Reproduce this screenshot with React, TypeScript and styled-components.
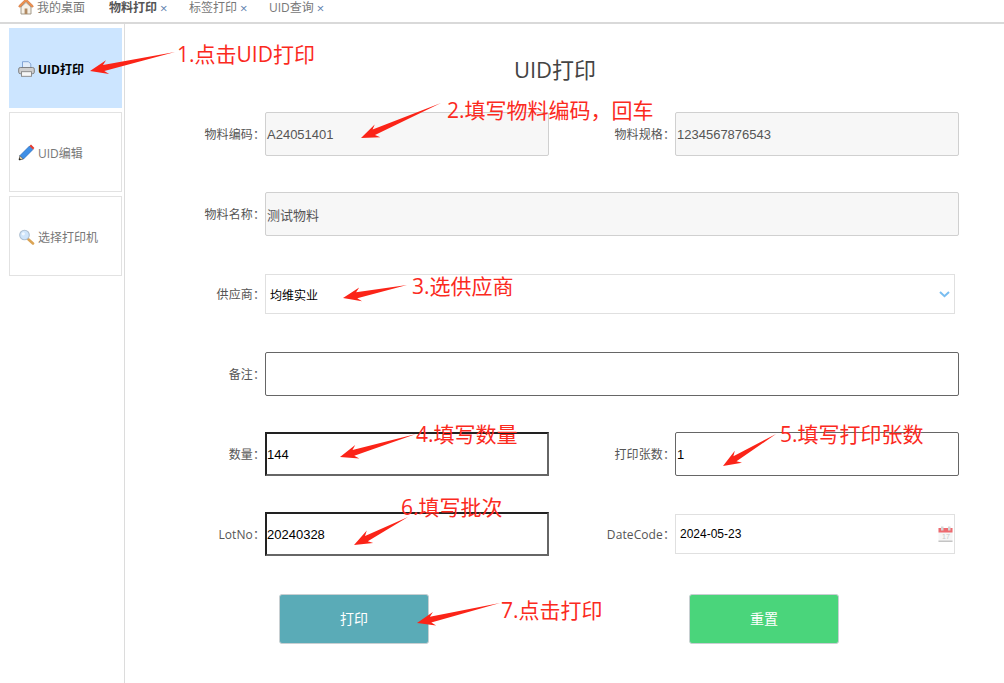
import React from "react";
import styled, { createGlobalStyle } from "styled-components";

const FONT = `"Open Sans", "Noto Sans CJK SC", sans-serif`;
const FIELD_FONT = `"Liberation Sans", "Noto Sans CJK SC", sans-serif`;

const GlobalStyle = createGlobalStyle`
  html, body {
    margin: 0;
    padding: 0;
    background: #fff;
    font-family: ${FONT};
    overflow: hidden;
  }
  * { box-sizing: border-box; }
`;

const Page = styled.div`
  position: relative;
  width: 1004px;
  height: 683px;
  overflow: hidden;
`;

const TabBar = styled.div`
  display: flex;
  align-items: center;
  height: 24px;
  padding: 0 0 7px 18px;
  border-bottom: 2px solid #d9d9d9;
  font-size: 12px;
  color: #777;
`;

const Tab = styled.span<{ $active?: boolean; $width: number }>`
  display: flex;
  align-items: center;
  gap: 3px;
  width: ${({ $width }) => $width}px;
  color: ${({ $active }) => ($active ? "#555" : "#777")};
  font-weight: ${({ $active }) => ($active ? 600 : 400)};
  white-space: nowrap;
  line-height: 16px;
`;

const TabClose = styled.span`
  color: #5f7fae;
  font-weight: 400;
  font-size: 13px;
`;

const Body = styled.div`
  display: flex;
  height: 659px;
`;

const Sidebar = styled.div`
  display: flex;
  flex-direction: column;
  gap: 4px;
  width: 125px;
  padding: 4px 2px 0 9px;
  border-right: 1px solid #dcdcdc;
`;

const MenuItem = styled.div<{ $active?: boolean }>`
  display: flex;
  align-items: center;
  gap: 3px;
  height: 80px;
  padding-left: 8px;
  padding-top: 1px;
  font-size: 12px;
  background: ${({ $active }) => ($active ? "#cce5ff" : "#fff")};
  border: 1px solid ${({ $active }) => ($active ? "#cce5ff" : "#e2e2e2")};
  color: ${({ $active }) => ($active ? "#000" : "#777")};
  font-weight: ${({ $active }) => ($active ? 700 : 400)};
`;

const Main = styled.div`
  flex: 1;
  padding-top: 30px;
`;

const Title = styled.h1`
  margin: 0 0 28px;
  width: 860px;
  text-align: center;
  font-size: 22px;
  line-height: 30px;
  font-weight: 400;
  color: #444;
`;

const Form = styled.div`
  display: flex;
  flex-direction: column;
  gap: 36px;
`;

const Row = styled.div`
  display: grid;
  grid-template-columns: 134px 290px 120px 290px;
  align-items: center;
  height: 44px;
`;

const Label = styled.label`
  margin-right: -6px;
  text-align: right;
  font-size: 12px;
  letter-spacing: 0.1px;
  color: #555;
  white-space: nowrap;
`;

const Field = styled.div<{ $tone?: "readonly" | "dark" | "focus"; $span?: boolean }>`
  display: flex;
  align-items: center;
  height: 44px;
  margin-left: 6px;
  padding-left: 1px;
  font-family: ${FIELD_FONT};
  font-size: 13px;
  border-radius: ${({ $tone }) => ($tone === "focus" ? 0 : "2px")};
  grid-column: ${({ $span }) => ($span ? "2 / span 3" : "auto")};
  color: ${({ $tone }) => ($tone === "readonly" ? "#555" : "#000")};
  background: ${({ $tone }) => ($tone === "readonly" ? "#f7f7f7" : "#fff")};
  border: ${({ $tone }) =>
    $tone === "readonly" ? "1px solid #d0d0d0" : $tone === "dark" ? "1px solid #666" : "none"};
  ${({ $tone }) =>
    $tone === "focus"
      ? `border-style: solid; border-width: 2px; border-color: #222 #666 #666 #222; padding-left: 0;`
      : ""}
`;

const PlainSelect = styled.div<{ $span?: boolean }>`
  display: flex;
  align-items: center;
  justify-content: space-between;
  height: 40px;
  margin-left: 6px;
  padding: 0 ${({ $span }) => ($span ? 4 : 1)}px 0 4px;
  font-family: ${FIELD_FONT};
  font-size: 12px;
  color: #000;
  border: 1px solid #e0e0e0;
  grid-column: ${({ $span }) => ($span ? "2 / span 3" : "auto")};
  width: ${({ $span }) => ($span ? "690px" : "280px")};
`;

const ButtonRow = styled.div`
  display: flex;
  gap: 260px;
  margin: 2px 0 0 154px;
`;

const Button = styled.button<{ $bg: string }>`
  width: 150px;
  height: 50px;
  padding: 0 0 3px;
  border: 1px solid #c8cfd2;
  border-radius: 3px;
  background: ${({ $bg }) => $bg};
  color: #fff;
  font-family: ${FONT};
  font-size: 14px;
`;

const Overlay = styled.svg`
  position: absolute;
  left: 0;
  top: 0;
  pointer-events: none;
`;

const Note = styled.span<{ $x: number; $y: number }>`
  position: absolute;
  left: ${({ $x }) => $x}px;
  top: ${({ $y }) => $y}px;
  font-family: ${FONT};
  font-size: 21px;
  line-height: 28px;
  color: #fb2a1e;
  white-space: nowrap;
`;

const HomeIcon = () => (
  <svg width="16" height="17" viewBox="0 0 16 17" style={{ marginTop: -2 }}>
    <path d="M8 0.8 L0.6 8 L1.8 9.4 L8 3.4 L14.2 9.4 L15.4 8 Z" fill="#ee9350" stroke="#c9652a" strokeWidth="0.6" />
    <path d="M3 9 L8 4.4 L13 9 V16 H3 Z" fill="#f6f1e8" stroke="#9b917f" strokeWidth="0.9" />
    <rect x="6.6" y="10.5" width="2.8" height="5.5" fill="#b08a63" />
  </svg>
);

const PrinterIcon = () => (
  <svg width="17" height="16" viewBox="0 0 17 16">
    <path d="M4.5 0.7 H10.5 L12.8 3 V8 H4.5 Z" fill="#e3edf9" stroke="#7b9dcf" strokeWidth="0.9" />
    <rect x="0.7" y="6.5" width="15.6" height="6.2" rx="1.6" fill="#cfcfcf" stroke="#777" strokeWidth="0.9" />
    <rect x="3.5" y="10.7" width="10" height="4.6" fill="#f6f6f6" stroke="#858585" strokeWidth="0.9" />
  </svg>
);

const PencilIcon = () => (
  <svg width="17" height="17" viewBox="0 0 17 17">
    <path d="M1 16 L2 11.5 L5.5 15 Z" fill="#f3d9a4" stroke="#222" strokeWidth="0.6" />
    <path d="M2 11.5 L11.5 2 L15 5.5 L5.5 15 Z" fill="#3f8fe6" stroke="#1c5fb0" strokeWidth="0.6" />
    <path d="M11.5 2 L13 0.6 L16.4 4 L15 5.5 Z" fill="#e23a2e" />
    <path d="M1 16 L1.5 14 L3 15.5 Z" fill="#111" />
  </svg>
);

const SearchIcon = () => (
  <svg width="17" height="16" viewBox="0 0 17 16">
    <path d="M10 10 L15 14.5" stroke="#dba455" strokeWidth="2.6" strokeLinecap="round" />
    <circle cx="6.5" cy="6" r="4.8" fill="#cfe5fb" stroke="#aebfd0" strokeWidth="1.1" />
    <circle cx="5.3" cy="4.8" r="1.6" fill="#f0f8ff" />
  </svg>
);

const ChevronIcon = () => (
  <svg width="11" height="7" viewBox="0 0 11 7">
    <path d="M1 1 L5.5 5.2 L10 1" fill="none" stroke="#79bdf0" strokeWidth="2" />
  </svg>
);

const CalendarIcon = () => (
  <svg width="15" height="16" viewBox="0 0 15 16">
    <rect x="0.5" y="2" width="14" height="14" fill="#f6f6f6" />
    <rect x="0.5" y="2" width="14" height="4.5" fill="#ee6b70" />
    <rect x="3" y="0.5" width="2.5" height="4" fill="#d5d5d5" />
    <rect x="10" y="0.5" width="2.5" height="4" fill="#d5d5d5" />
    <rect x="0.5" y="14.5" width="14" height="1.5" fill="#c4c4c4" />
    <text x="4" y="13" fontSize="7" fill="#c8c8c8" fontFamily="Liberation Sans">17</text>
  </svg>
);

// thin tail widening into a barbed head, all in page coordinates
const arrowPoints = (x1: number, y1: number, x2: number, y2: number) => {
  const len = Math.hypot(x2 - x1, y2 - y1);
  const ux = (x2 - x1) / len;
  const uy = (y2 - y1) / len;
  const nx = -uy;
  const ny = ux;
  const at = (back: number, side: number) =>
    `${(x2 - ux * back + nx * side).toFixed(1)},${(y2 - uy * back + ny * side).toFixed(1)}`;
  return [
    `${x1},${y1}`,
    at(14, 3),
    at(18, 7),
    at(0, 0),
    at(18, -7),
    at(14, -3),
  ].join(" ");
};

const ARROWS = [
  [175, 52, 90, 71],
  [441, 103, 361, 138],
  [407, 285, 343, 298],
  [416, 434, 340, 457],
  [776, 434, 723, 466],
  [408, 517, 354, 545],
  [500, 603, 417, 623],
];

const NOTES = [
  { x: 177, y: 40, text: "1.点击UID打印" },
  { x: 447, y: 96, text: "2.填写物料编码，回车" },
  { x: 412, y: 272, text: "3.选供应商" },
  { x: 416, y: 420, text: "4.填写数量" },
  { x: 780, y: 420, text: "5.填写打印张数" },
  { x: 401, y: 493, text: "6.填写批次" },
  { x: 501, y: 596, text: "7.点击打印" },
];

const App = () => (
  <Page>
    <GlobalStyle />
    <TabBar>
      <Tab $width={91}>
        <HomeIcon />
        我的桌面
      </Tab>
      <Tab $active $width={80}>
        物料打印 <TabClose>×</TabClose>
      </Tab>
      <Tab $width={80}>
        标签打印 <TabClose>×</TabClose>
      </Tab>
      <Tab $width={70}>
        UID查询 <TabClose>×</TabClose>
      </Tab>
    </TabBar>
    <Body>
      <Sidebar>
        <MenuItem $active>
          <PrinterIcon />
          UID打印
        </MenuItem>
        <MenuItem>
          <PencilIcon />
          UID编辑
        </MenuItem>
        <MenuItem>
          <SearchIcon />
          选择打印机
        </MenuItem>
      </Sidebar>
      <Main>
        <Title>UID打印</Title>
        <Form>
          <Row>
            <Label>物料编码：</Label>
            <Field $tone="readonly">A24051401</Field>
            <Label>物料规格：</Label>
            <Field $tone="readonly">1234567876543</Field>
          </Row>
          <Row>
            <Label>物料名称：</Label>
            <Field $tone="readonly" $span>
              测试物料
            </Field>
          </Row>
          <Row>
            <Label>供应商：</Label>
            <PlainSelect $span>
              均维实业
              <ChevronIcon />
            </PlainSelect>
          </Row>
          <Row>
            <Label>备注：</Label>
            <Field $tone="dark" $span />
          </Row>
          <Row>
            <Label>数量：</Label>
            <Field $tone="focus">144</Field>
            <Label>打印张数：</Label>
            <Field $tone="dark">1</Field>
          </Row>
          <Row>
            <Label>LotNo：</Label>
            <Field $tone="focus">20240328</Field>
            <Label>DateCode：</Label>
            <PlainSelect>
              2024-05-23
              <CalendarIcon />
            </PlainSelect>
          </Row>
          <ButtonRow>
            <Button $bg="#5aabb7">打印</Button>
            <Button $bg="#4ad57b">重置</Button>
          </ButtonRow>
        </Form>
      </Main>
    </Body>
    <Overlay width="1004" height="683" viewBox="0 0 1004 683">
      {ARROWS.map(([x1, y1, x2, y2]) => (
        <polygon key={`${x1}-${y1}`} points={arrowPoints(x1, y1, x2, y2)} fill="#fb2418" />
      ))}
    </Overlay>
    {NOTES.map((note) => (
      <Note key={note.text} $x={note.x} $y={note.y}>
        {note.text}
      </Note>
    ))}
  </Page>
);

export default App;
